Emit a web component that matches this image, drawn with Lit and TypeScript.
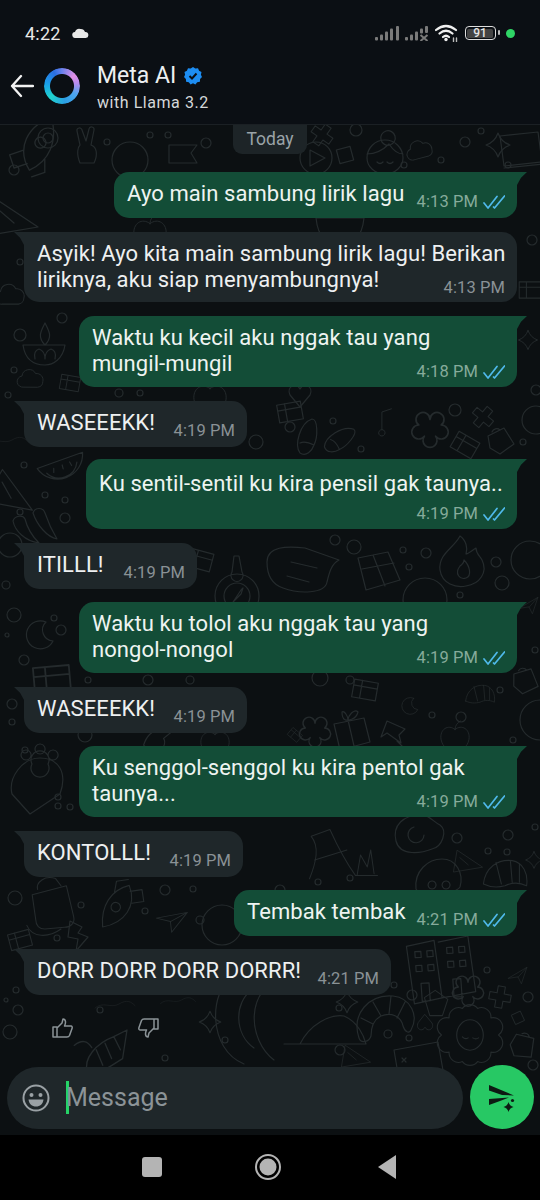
import { LitElement, html, css, svg } from "lit";
import { customElement } from "lit/decorators.js";

type Msg = { side: "in" | "out"; lines: string[]; time: string; w: number; gap: number; kind: "inline" | "over" | "below" };

const msgs: Msg[] = [
  { side: "out", lines: ["Ayo main sambung lirik lagu"], time: "4:13 PM", w: 403, gap: 18, kind: "inline" },
  { side: "in", lines: ["Asyik! Ayo kita main sambung lirik lagu! Berikan", "liriknya, aku siap menyambungnya!"], time: "4:13 PM", w: 493, gap: 14, kind: "over" },
  { side: "out", lines: ["Waktu ku kecil aku nggak tau yang", "mungil-mungil"], time: "4:18 PM", w: 438, gap: 14, kind: "over" },
  { side: "in", lines: ["WASEEEKK!"], time: "4:19 PM", w: 223, gap: 14, kind: "inline" },
  { side: "out", lines: ["Ku sentil-sentil ku kira pensil gak taunya.."], time: "4:19 PM", w: 431, gap: 12, kind: "below" },
  { side: "in", lines: ["ITILLL!"], time: "4:19 PM", w: 173, gap: 14, kind: "inline" },
  { side: "out", lines: ["Waktu ku tolol aku nggak tau yang", "nongol-nongol"], time: "4:19 PM", w: 438, gap: 13, kind: "over" },
  { side: "in", lines: ["WASEEEKK!"], time: "4:19 PM", w: 223, gap: 14, kind: "inline" },
  { side: "out", lines: ["Ku senggol-senggol ku kira pentol gak", "taunya..."], time: "4:19 PM", w: 438, gap: 13, kind: "over" },
  { side: "in", lines: ["KONTOLLL!"], time: "4:19 PM", w: 219, gap: 14, kind: "inline" },
  { side: "out", lines: ["Tembak tembak"], time: "4:21 PM", w: 283, gap: 13, kind: "inline" },
  { side: "in", lines: ["DORR DORR DORR DORRR!"], time: "4:21 PM", w: 367, gap: 13, kind: "inline" },
];

const P: Record<string, string> = {
  star: "M0 -12Q3 -3 12 0Q3 3 0 12Q-3 3 -12 0Q-3 -3 0 -12Z",
  cloud: "M-13 9a7 7 0 0 1-2-14a9 9 0 0 1 17-3a8 8 0 0 1 9 10a7 7 0 0 1-6 7Z",
  cross: "M-4-12h8v8h8v8h-8v8h-8v-8h-8v-8h8Z",
  flower: "M0-4a5 5 0 1 1 8 4a5 5 0 1 1-4 8a5 5 0 1 1-8 0a5 5 0 1 1-4-8a5 5 0 1 1 8-4Z",
  melon: "M-24-10A25 25 0 0 0 24-14ZM-16-3a18 18 0 0 0 32-3M-8-6l-1 4M1-7v4M9-8l1 4",
  plane: "M-16 6L18-14L8 16L2 4ZM2 4L18-14",
  play: "M-16 0a16 16 0 1 0 32 0a16 16 0 1 0-32 0M-6-8L9 0L-6 8Z",
  target: "M-10 0a10 10 0 1 0 20 0a10 10 0 1 0-20 0M-5 0a5 5 0 1 0 10 0a5 5 0 1 0-10 0",
  rocket: "M-6 22C-18 2-8-18 14-26C20-4 12 14-6 22ZM-12 4L-24 8L-20 20L-8 16M8 12L8 24L-4 28M4-8a5 5 0 1 0 .1 0",
  hand: "M-8 16C-12 6-10 0-8-2L-11-16a2.5 2.5 0 0 1 5-1L-2-6L1-18a2.5 2.5 0 0 1 5 1L3-2C9 0 10 8 6 16Z",
  head: "M-18 6a18 18 0 0 1 36 0a18 16 0 0 1-36 0ZM-18 2C-8 2 0-4 4-8C8-2 12 2 18 2M-4-12a7 7 0 1 1 14-4a7 7 0 0 1-14 4M-8 10q3 3 6 0M2 10q3 3 6 0",
  flag: "M-14-10H14L8-2L14 8H-14Z",
  laptop: "M-22-14L16-18L20 12L-18 16ZM-18 18L22 14",
  lamp: "M-22 0H20C18 14 8 20 0 20C-12 20-20 14-22 0ZM0 0C-8-8-4-14 0-22C4-14 8-8 0 0M-10 14q-2-8 4-10q6 2 6 10q0-8 6-10q6 2 4 10",
  box: "M-12-9h24v18h-24ZM-12-3h24M-4-9v18",
  cube: "M-20-14L10-20L22 8L-12 18ZM-5-17L7 14M-16-3L16-9",
  bubble: "M-38-8C-38-24-18-24 0-22L34-10C26-6 24 4 22 12C20 24-6 24-22 18C-34 14-38 4-38-8ZM-14-8L12-2M-18 6L4 12",
  flame: "M-2-26C-8-14-24-8-22 8C-20 22-6 26 4 24C18 22 26 10 20-2C18-6 14-8 14-14C8-10 6-8 4-8C6-14 4-22-2-26ZM-2 4C-8 12-2 18 4 16C10 14 8 4 2-2C2 2 0 2-2 4Z",
  compass: "M-22 6a22 22 0 1 0 44 0a22 22 0 1 0-44 0M-13 6a13 13 0 1 0 26 0a13 13 0 1 0-26 0M-4 12L4 0L6-2L4 4ZM-5-18a6 6 0 1 0 10 0L2-34h-5Z",
  moon: "M6-13A14 14 0 1 0 13 6A11 11 0 0 1 6-13Z",
  chili: "M-22-6C-20 4-10 14 4 16C-4 8-8 0-10-8C-12-12-20-12-22-6ZM-2-14C2-2 12 10 22 12C16 2 12-8 10-14C8-20 0-20-2-14Z",
  slipper: "M-8 16C-14 8-8-14 4-18C10-18 10 0 6 8C4 14-2 20-8 16ZM-8 6C-4 4 2 6 6 8",
  paw: "M-10 42L-28 22C-32 6-18-14 0-14C18-14 28 0 20 22ZM-8-8a9 9 0 1 0 16 0a9 9 0 1 0-16 0M-14-22a5 5 0 1 0 .1 0M0-28a5 5 0 1 0 .1 0M13-22a5 5 0 1 0 .1 0",
  jar: "M-22-8L16-18L24 16C26 24 20 28 14 28L-8 30C-14 30-18 26-18 20ZM-16-14C-18-22-8-30 4-26L10-18M-28 26C-22 40-4 40 10 30",
  bolt: "M-8-14L4-8L0-2L10 2L-2 16L0 4L-10 2Z",
  egg: "M-22 6C-26-10-14-20 2-20C12-20 14-14 22-10C30-4 24 12 14 14C4 18-18 22-22 6ZM-4-8a8 8 0 1 0 10 8",
  blob: "M-22 12C-24-6-10-18 4-18C18-18 26-4 22 10C16 18-18 20-22 12ZM-6 4a4 4 0 1 0 .1 0M8 4a4 4 0 1 0 .1 0",
  shrimp: "M-24 10C-22-8-8-18 8-16C20-14 26-2 24 12C16 8 8 8 0 12C-8 14-16 14-24 10ZM-10-14L-4 10M6-16L8 8M16-12L16 8",
  pin: "M-8-14L10-6L4 0L6 8L-8-2L-14 2ZM2 6L14 18",
  gift: "M-16-6L14-12L20 12L-10 20ZM-2-10L4 16M-8-18C-8-8-2-10-2-10C-2-10 6-10 8-18C4-22-2-14-2-10C-2-14-6-20-8-18Z",
  building: "M-32-24L-4-28L0 30L-28 34ZM0-26L30-30L34 26L0 30M-24-18h6v6h-6ZM-12-18h6v6h-6ZM-24-4h6v6h-6ZM-12-4h6v6h-6ZM8-20h6v6h-6ZM20-20h6v6h-6ZM8-6h6v6h-6ZM20-6h6v6h-6ZM-20 14h8v18h-8ZM12 12h8v18h-8Z",
  croissant: "M-26 18C-34-6-16-26 8-24C26-22 34-4 26 10C24 14 20 12 18 6C16-4 6-8-4-4C-12 0-14 8-14 16C-16 22-24 24-26 18ZM-24-2L-12 4M-12-18L-4-4M6-24L4-6M20-18L12-2",
  lady: "M-30 0a10 10 0 0 1 8-18a10 10 0 0 1 14-10a10 10 0 0 1 16 0a10 10 0 0 1 14 10a10 10 0 0 1 8 18a10 10 0 0 1-8 18a10 10 0 0 1-14 10a10 10 0 0 1-16 0a10 10 0 0 1-14-10a10 10 0 0 1-8-18ZM-14 0a14 16 0 1 0 28 0a14 16 0 1 0-28 0M-8 2q3 3 6 1M3 3q3 2 6 0",
  heart: "M0 12L-10 0C-14-8-4-14 0-6C4-14 14-8 10 0Z",
  tile: "M0-10L10 0L0 10L-10 0Z",
  leaf: "M-30 14C-20-6 0-16 14-14C28-8 34 6 36 14ZM-46 14H36",
  phone: "M-26-12L18-20L24 14L-20 24ZM-18-4l4 4M-14-4l-4 4",
  arcs: "M-20-44C-46-30-46 30-10 44M-2-30C-20-18-20 14 0 28M30-44C-10-30-6 20 20 40",
  lobster: "M-16 18C-20 6-8-8 8-14L20-20L16 6C6 12-6 22-16 18ZM8-14L14-2M0-8L6 6M-8-2L-2 12M-28-6q10-8 16 2M-24 18l-12 6",
  diamond: "M-14-6L-2-14L12-4L6 14L-8 14Z",
  bag: "M-12-4L4-12L14 4L0 14L-10 8ZM-8-8a5 5 0 0 1 8-2",
  wave: "M-50 10C-30-8-10 12 10 0S40-6 50 4",
  hand2: "M-30 28C-22 8-18-10-28-22L-6-30C4-8 14 10 24 24L50 24M26 24L30 0L38 14L42-6L46 22M-24 6L14-6",
  note: "M-4 12a4 4 0 1 0 .1 0V-10L8-14",
  bowl: "M-24-10H24C22 10 12 18 0 18C-12 18-22 10-24-10ZM-16-14C-8-24 8-24 16-14",
  apple: "M0-8C-10-16-22-8-20 6C-18 18-8 24 0 20C8 24 18 18 20 6C22-8 10-16 0-8ZM0-8C0-14 4-18 8-20",
  cone: "M-16-16L26 12L-22 20ZM-12-4L2 8",
};

const D: (string | number)[][] = [
  ["rocket", 36, 146, 1.1, 0], ["target", 48, 138, 1, 0], ["hand", 88, 147, 1, 0], ["c", 130, 160, 18], ["c", 107, 142, 3], ["c", 150, 135, 3], ["c", 168, 135, 3], ["flag", 183, 155, 1, 0], ["c", 206, 143, 5],
  ["cross", 322, 135, .9, 35], ["c", 356, 130, 6], ["play", 316, 158, 1, 0], ["tile", 345, 155, 1, 30], ["head", 385, 152, 1, 0], ["c", 404, 165, 3], ["cloud", 423, 150, .8, -15], ["c", 441, 160, 3], ["c", 465, 142, 5], ["c", 481, 131, 3], ["star", 498, 145, 1, 0], ["c", 508, 165, 3], ["laptop", 522, 150, 1, 0],
  ["c", 14, 170, 5], ["cone", 12, 215, 1, 0], ["apple", 150, 230, .8, 0], ["c", 20, 262, 3], ["cloud", 14, 296, .9, 0], ["bowl", 340, 228, 1, 0], ["c", 532, 240, 5], ["box", 530, 290, .9, 0], ["star", 528, 340, .8, 0], ["c", 536, 390, 5],
  ["c", 20, 335, 6], ["lamp", 45, 345, 1, 0], ["c", 14, 370, 3], ["cloud", 34, 380, .8, 0], ["box", 70, 383, .8, 10], ["c", 119, 393, 4], ["c", 140, 393, 3], ["c", 62, 318, 5], ["c", 8, 395, 3],
  ["heart", 300, 395, 1, 0], ["apple", 210, 395, .8, 0], ["c", 256, 442, 7], ["melon", 63, 472, 1, -15], ["cone", 12, 490, 1, 20], ["c", 24, 465, 3], ["c", 45, 495, 3], ["c", 65, 500, 3], ["c", 65, 518, 5], ["c", 20, 512, 3], ["chili", 35, 527, 1, 0], ["wave", 8, 440, .4, 0],
  ["c", 290, 427, 5], ["slipper", 308, 437, 1, 0], ["slipper", 340, 440, .95, 40], ["c", 333, 421, 3], ["c", 361, 449, 3], ["note", 385, 420, .8, 0], ["flower", 430, 425, 1.4, 0], ["bag", 500, 440, 1, 0], ["box", 465, 445, 1, 30], ["cross", 483, 417, .9, 40], ["c", 455, 410, 6], ["c", 523, 442, 3], ["c", 536, 420, 14], ["box", 290, 412, 1, -10], ["c", 200, 420, 3],
  ["bubble", 305, 570, 1, 0], ["cube", 378, 572, 1, 0], ["c", 335, 540, 5], ["c", 354, 547, 7], ["c", 403, 550, 3], ["c", 426, 553, 5], ["c", 409, 567, 3], ["flame", 462, 562, 1, 0], ["c", 496, 562, 5], ["c", 502, 583, 7], ["c", 460, 595, 3], ["c", 425, 600, 22], ["c", 530, 560, 19], ["plane", 528, 605, .55, 0], ["c", 535, 650, 3], ["c", 10, 545, 12],
  ["compass", 237, 590, 1, 0], ["box", 200, 560, 1, 15], ["c", 7, 635, 2], ["moon", 40, 635, 1, 0], ["c", 61, 630, 5], ["c", 24, 660, 5], ["box", 52, 680, 1.5, -5], ["c", 88, 680, 3], ["c", 14, 615, 7], ["c", 6, 585, 4], ["c", 54, 618, 3],
  ["c", 148, 680, 5], ["c", 190, 680, 4], ["box", 365, 690, 1, 10], ["c", 320, 678, 8], ["c", 350, 680, 4], ["shrimp", 480, 695, .6, 0], ["bag", 525, 680, 1, 10], ["c", 500, 690, 3],
  ["paw", 40, 772, 1, 0], ["c", 25, 750, 3], ["c", 12, 704, 5], ["c", 12, 722, 3], ["c", 58, 806, 3], ["c", 70, 807, 3], ["c", 85, 735, 7], ["hand", 160, 738, 1, 40], ["apple", 215, 740, .7, 0], ["c", 58, 797, 3],
  ["gift", 350, 730, 1, 0], ["flower", 315, 728, 1.2, 0], ["pin", 395, 735, 1, 0], ["c", 432, 715, 3], ["c", 461, 717, 5], ["apple", 455, 735, .7, 0], ["c", 513, 740, 3], ["moon", 410, 706, .6, 0], ["c", 540, 720, 20], ["box", 295, 735, .5, 40], ["hand2", 335, 855, .85, 0], ["egg", 418, 835, 1, 0], ["c", 457, 838, 5], ["cone", 467, 860, .6, 0], ["c", 488, 851, 3], ["blob", 438, 877, 1, 0], ["shrimp", 505, 875, .9, 0], ["c", 508, 835, 5], ["c", 507, 852, 3], ["c", 535, 827, 3], ["c", 350, 878, 3], ["c", 318, 882, 3], ["c", 280, 890, 5], ["star", 534, 860, .7, 0],
  ["rocket", 120, 905, .95, 190], ["jar", 52, 902, .9, 0], ["c", 15, 898, 7], ["c", 81, 905, 3], ["plane", 170, 918, .8, 20], ["c", 145, 911, 3], ["c", 165, 890, 5], ["c", 193, 889, 3], ["c", 200, 920, 4], ["bolt", 78, 935, 1, 0], ["box", 20, 940, .9, -15], ["c", 57, 938, 3], ["c", 222, 925, 20],
  ["building", 440, 968, 1, -4], ["flower", 468, 987, 1.2, 0], ["cross", 500, 997, .9, 10], ["plane", 517, 975, .55, 0], ["c", 487, 970, 3], ["c", 528, 997, 5], ["c", 412, 995, 5], ["diamond", 437, 1003, .9, 0], ["c", 394, 985, 3], ["croissant", 385, 1020, 1, 0], ["star", 347, 1002, .9, 0], ["c", 388, 1034, 4], ["c", 339, 1008, 3], ["c", 409, 1038, 3], ["heart", 425, 1023, .7, 180], ["lady", 470, 1035, .95, 0], ["tile", 518, 1018, .7, 20], ["bag", 523, 1045, 1, 40], ["c", 533, 1065, 5], ["c", 340, 1050, 5],
  ["leaf", 330, 1030, 1, 0], ["phone", 420, 1062, 1, 0], ["cone", 355, 1055, .6, 0], ["c", 16, 990, 3], ["c", 18, 1010, 5], ["c", 10, 1032, 7], ["arcs", 254, 1020, 1, 0], ["star", 210, 1022, .9, 0], ["c", 225, 1040, 3], ["lobster", 105, 1052, 1.1, 0], ["c", 165, 1058, 3], ["c", 6, 1000, 2], ["c", 100, 1010, 3], ["wave", 115, 1004, .4, 0], ["wave", 178, 1000, .35, 0],
];

const doodles = svg`${D.map((d) => {
  if (d[0] === "c") return svg`<circle cx=${d[1]} cy=${d[2]} r=${d[3]}></circle>`;
  const p = P[d[0] as string];
  if (!p) return null;
  return svg`<path d=${p} transform="translate(${d[1]} ${d[2]}) rotate(${d[4]}) scale(${d[3]})"></path>`;
})}`;

const ticks = html`<svg class="ticks" viewBox="0 0 22 14" width="22" height="14"><path d="M1 8L5 13L14 1.500M10.500 12L11.500 13L21.500 1" fill="none" stroke="#4fb9ea" stroke-width="1.700" stroke-linecap="round" stroke-linejoin="round"/></svg>`;

@customElement("app-root")
export class AppRoot extends LitElement {
  static styles = css`
    :host { display: flex; flex-direction: column; width: 540px; height: 1200px; background: #000; overflow: hidden; font-family: Roboto, "Noto Sans", sans-serif; color: #e9edef; }
    .top { background: #0b0f14; height: 125px; flex: none; box-sizing: border-box; border-bottom: 1px solid #1b2024; display: flex; flex-direction: column; }
    .status { height: 66px; flex: none; display: flex; align-items: center; padding: 0 25px; box-sizing: border-box; gap: 10px; color: #e8e8e8; }
    .clock { font-size: 18px; font-weight: 400; letter-spacing: .2px; width: 37px; }
    .sp { flex: 1; }
    .sicons { display: flex; align-items: center; }
    .s2 { margin-left: 5px; }
    .wifi { margin-left: 5px; }
    .batt { width: 31px; height: 14px; border: 1.5px solid #ddd; border-radius: 4px; display: flex; padding: 1.5px; box-sizing: border-box; position: relative; margin-left: 6px; }
    .batt span { flex: 1; background: #434343; border-radius: 1.5px; font-size: 12px; line-height: 8px; text-align: center; color: #e4e4e4; font-weight: 500; }
    .batt::after { content: ""; position: absolute; right: -5px; top: 3px; width: 2px; height: 5px; background: #bbb; border-radius: 1px; }
    .dot { width: 9px; height: 9px; background: #2fd566; border-radius: 50%; margin-left: 10.5px; }
    .head { display: flex; align-items: center; height: 42px; padding-left: 10px; margin-top: -1px; }
    .ring { width: 36px; height: 36px; border-radius: 50%; margin-left: 10px; background: conic-gradient(from 0deg, #6a82ee, #e28fe6 50deg, #b58cf0 80deg, #4ea4ee 120deg, #2b9fe4 170deg, #1fd3cd 225deg, #1a9eea 280deg, #2a6ee0 330deg, #6a82ee); -webkit-mask: radial-gradient(circle, transparent 11.5px, #000 12.5px); mask: radial-gradient(circle, transparent 11.5px, #000 12.5px); }
    .names { margin-left: 17px; display: flex; flex-direction: column; margin-top: 3px; }
    .name { display: flex; align-items: center; gap: 8px; font-size: 23px; line-height: 27px; color: #eceff1; }
    .sub { font-size: 16px; line-height: 21px; letter-spacing: .55px; color: #d5d8da; margin-top: 3px; }
    .chat { flex: 1; position: relative; background: #0c1012; display: flex; flex-direction: column; min-height: 0; overflow: hidden; }
    .bg { position: absolute; inset: 0; fill: none; stroke: #252b2d; stroke-width: 1.2; stroke-linejoin: round; stroke-linecap: round; }
    .list { position: relative; flex: 1; display: flex; flex-direction: column; min-height: 0; padding: 0 23px 0 24px; }
    .day { align-self: center; height: 30px; margin-top: -1px; padding: 0 13px; background: #1d2427; border-radius: 0 0 9px 9px; font-size: 17.5px; line-height: 30px; color: #9aa3a7; margin-left: -1px; }
    .b { position: relative; box-sizing: border-box; padding: 9px 12px 0 13px; font-size: 22px; line-height: 26px; letter-spacing: .08px; }
    .b.in { align-self: flex-start; background: #1f272a; border-radius: 0 15px 15px 15px; color: #eef0f1; }
    .b.out { align-self: flex-end; background: #134d37; border-radius: 15px 0 15px 15px; color: #eef4f1; }
    .b::before { content: ""; position: absolute; top: 0; width: 10px; height: 13px; background: inherit; }
    .b.in::before { left: -10px; clip-path: polygon(0 0, 100% 0, 100% 100%, 60% 45%); }
    .b.out::before { right: -10px; clip-path: polygon(0 0, 100% 0, 40% 45%, 0 100%); }
    .row { display: flex; justify-content: space-between; align-items: flex-end; }
    .line { white-space: nowrap; }
    .meta { display: flex; align-items: center; justify-content: flex-end; gap: 5px; font-size: 16.5px; line-height: 18px; letter-spacing: .1px; white-space: nowrap; }
    .in .meta { color: #8a9296; }
    .out .meta { color: #86ab9b; }
    .row .meta { margin-bottom: -4px; }
    .inline { height: 46px; }
    .over .meta { margin-top: -14px; }
    .over { height: 70px; }
    .out.over { height: 71px; }
    .below { height: 70px; padding-top: 12px; }
    .below .meta { margin-top: 8px; }
    .acts { position: relative; display: flex; gap: 65px; padding: 22px 0 0 27px; height: 0; }
    .composer { position: relative; flex: none; display: flex; align-items: center; gap: 7px; padding: 0 6px 6px 7px; }
    .input { flex: 1; height: 62px; border-radius: 31px; background: #1f272a; display: flex; align-items: center; padding-left: 15px; margin-top: 1px; }
    .caret { width: 3px; height: 33px; background: #25d366; margin-left: 16px; }
    .ph { font-size: 25px; color: #8b9397; margin-left: -3px; }
    .send { width: 64px; height: 64px; border-radius: 50%; background: #27c864; display: flex; align-items: center; justify-content: center; }
    .nav { height: 65px; flex: none; background: #000; position: relative; display: flex; align-items: center; justify-content: center; }
    .nav svg { display: block; }
  `;

  render() {
    return html`
      <div class="top">
        <div class="status">
          <span class="clock">4:22</span>
          <svg width="17" height="10" viewBox="0 0 17 10"><path d="M3.500 10a3 3 0 0 1-.5-6a4 4 0 0 1 5.500-3a4.500 4.500 0 0 1 4.500 3a3 3 0 0 1 .7 6Z" fill="#e8e8e8"/></svg>
          <span class="sp"></span>
          <div class="sicons">
            <svg width="25" height="16" viewBox="0 0 25 16" fill="#7a7a7a"><rect x="0" y="12" width="3" height="3.500" rx="1"/><rect x="5" y="9.500" width="3" height="6" rx="1"/><rect x="10" y="6.500" width="3" height="9" rx="1"/><rect x="15" y="3.500" width="3" height="12" rx="1"/><rect x="21" y="1" width="3" height="14.500" rx="1"/></svg>
            <svg class="s2" width="25" height="16" viewBox="0 0 25 16" fill="#7a7a7a"><rect x="0" y="12" width="3" height="3.500" rx="1"/><rect x="5" y="9.500" width="3" height="6" rx="1"/><rect x="10" y="6.500" width="3" height="9" rx="1"/><rect x="15" y="3.500" width="3" height="5" rx="1"/><rect x="20" y="1" width="3" height="7" rx="1"/><path d="M15.500 10l7 6M22.500 10l-7 6" stroke="#7a7a7a" stroke-width="2"/></svg>
            <svg class="wifi" width="24" height="18" viewBox="0 0 24 18" fill="none" stroke="#f0f0f0" stroke-width="2.200" stroke-linecap="round"><path d="M1 6Q11-2 21 6M4.500 9.500Q11 4 17.500 9.500M8 13Q11 10.500 14 13"/><circle cx="11" cy="15.500" r="1.700" fill="#f0f0f0" stroke="none"/><path d="M18.500 14v3.500M21.500 14v3.500" stroke-width="1.400" stroke="#bbb"/></svg>
            <div class="batt"><span>91</span></div>
            <div class="dot"></div>
          </div>
        </div>
        <div class="head">
          <svg width="24" height="24" viewBox="0 0 24 24" fill="none" stroke="#f2f2f2" stroke-width="2.300" stroke-linecap="round" stroke-linejoin="round"><path d="M2 12H23M11 2L2 12L11 22"/></svg>
          <div class="ring"></div>
          <div class="names">
            <div class="name">Meta AI
              <svg width="18" height="18" viewBox="0 0 18 18"><path d="M9 0l2.300 1.500 2.700-.3 1.100 2.500 2.400 1.300-.6 2.700L18 10l-1.900 2-.2 2.700-2.700.5L11.400 17.500 9 16.300l-2.400 1.200-1.800-2.300-2.700-.5L1.900 12 0 10l1.100-2.300-.6-2.700 2.400-1.300L4 1.200l2.700.3Z" fill="#1d8df2"/><path d="M5.500 9l2.500 2.500 4.500-5" fill="none" stroke="#0b0f14" stroke-width="2"/></svg>
            </div>
            <div class="sub">with Llama 3.2</div>
          </div>
        </div>
      </div>
      <div class="chat">
        <svg class="bg" width="540" height="1010" viewBox="0 125 540 1010">${doodles}</svg>
        <div class="list">
          <div class="day">Today</div>
          ${msgs.map((m) => this.bubble(m))}
          <div class="acts">
            <svg width="22" height="22" viewBox="0 0 22 22" fill="none" stroke="#8b9397" stroke-width="1.500" stroke-linejoin="round"><path d="M2 10h4v10H2ZM6 11L11 6L12 2C15 2 15 6 13.500 9H20C21 9 21.500 10 21 11.500L18.500 18.500C18 19.500 17.500 20 16 20H6"/></svg>
            <svg width="22" height="22" viewBox="0 0 22 22" fill="none" stroke="#8b9397" stroke-width="1.500" stroke-linejoin="round"><path d="M20 12h-4V2h4ZM16 11L11 16L10 20C7 20 7 16 8.500 13H2C1 13 .5 12 1 10.500L3.500 3.500C4 2.500 4.500 2 6 2H16"/></svg>
          </div>
        </div>
        <div class="composer">
          <div class="input">
            <svg width="28" height="28" viewBox="0 0 28 28" fill="none"><circle cx="14" cy="14" r="12.500" stroke="#9aa1a5" stroke-width="2"/><circle cx="9.500" cy="11" r="2" fill="#9aa1a5"/><circle cx="18.500" cy="11" r="2" fill="#9aa1a5"/><path d="M6.500 15.500H21.500C21 20 18 22.500 14 22.500S7 20 6.500 15.500Z" fill="#9aa1a5"/></svg>
            <div class="caret"></div>
            <div class="ph">Message</div>
          </div>
          <div class="send">
            <svg width="32" height="32" viewBox="0 0 32 32" fill="#0d1a13"><path d="M3 4L28 14.500L16 14L3 9.500ZM3 18L23 16.500L14 20L3 24Z"/><path d="M22.500 21Q23.500 25 27.500 26Q23.500 27 22.500 31Q21.500 27 17.500 26Q21.500 25 22.500 21Z"/><circle cx="26.500" cy="19.500" r="1.600"/></svg>
          </div>
        </div>
      </div>
      <div class="nav">
        <svg width="540" height="65" viewBox="0 0 540 65">
          <rect x="142" y="22" width="20" height="20" rx="3" fill="#b4b4b4"/>
          <circle cx="268" cy="32" r="12" fill="none" stroke="#b4b4b4" stroke-width="2"/>
          <circle cx="268" cy="32" r="8.500" fill="#b4b4b4"/>
          <path d="M396 20V44L378 32Z" fill="#b4b4b4"/>
        </svg>
      </div>
    `;
  }

  bubble(m: Msg) {
    const meta = html`<div class="meta">${m.time}${m.side === "out" ? ticks : null}</div>`;
    const style = `width:${m.w}px;margin-top:${m.gap}px`;
    if (m.kind === "inline") {
      return html`<div class="b ${m.side} inline" style=${style}><div class="row"><span class="line">${m.lines[0]}</span>${meta}</div></div>`;
    }
    return html`<div class="b ${m.side} ${m.kind}" style=${style}>${m.lines.map((l) => html`<div class="line">${l}</div>`)}${meta}</div>`;
  }
}
